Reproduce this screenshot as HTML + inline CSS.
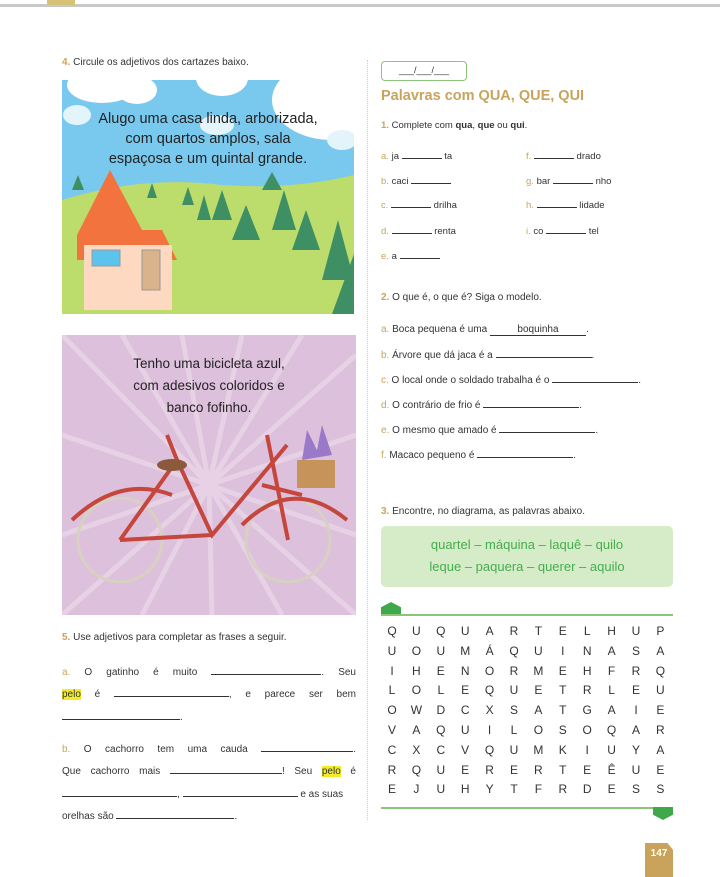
<!DOCTYPE html><html><head><meta charset="utf-8"><style>
body{margin:0;width:720px;height:877px;background:#fff;position:relative;overflow:hidden;font-family:"Liberation Sans",sans-serif;color:#333;font-size:10px}
.a{position:absolute;white-space:nowrap}
.n{color:#c9a35b;font-weight:bold}
.l{color:#c9a35b}
.u{display:inline-block;border-bottom:1px solid #333;height:8px;vertical-align:baseline}
.hl{background:#f3ea2a}
.g{position:absolute;font-size:12px;color:#333;width:16px;text-align:center}
</style></head><body>
<div class="a" style="left:0;top:4px;width:720px;height:3px;background:#c8c8c8"></div>
<div class="a" style="left:47px;top:0;width:28px;height:5px;background:#d8c27a"></div>
<div class="a" style="left:367px;top:60px;height:760px;border-left:1px dotted #d8cfa0"></div>

<div class="a" style="left:62px;top:57px;font-size:10px"><span class="n">4.</span> Circule os adjetivos dos cartazes baixo.</div>
<svg class="a" style="left:62px;top:80px" width="292" height="234" viewBox="0 0 292 234">
<rect width="292" height="234" fill="#79c9ef"/>
<path d="M0 120 Q80 95 160 105 Q230 110 292 95 L292 234 L0 234Z" fill="#bcdc6c"/>
<ellipse cx="40" cy="5" rx="35" ry="18" fill="#fff"/><ellipse cx="75" cy="10" rx="20" ry="14" fill="#fff"/>
<ellipse cx="160" cy="-2" rx="26" ry="18" fill="#fff"/>
<ellipse cx="270" cy="20" rx="60" ry="40" fill="#fff"/>
<ellipse cx="155" cy="45" rx="17" ry="10" fill="#e4f4fb"/>
<ellipse cx="15" cy="35" rx="14" ry="10" fill="#e4f4fb"/>
<ellipse cx="280" cy="60" rx="15" ry="10" fill="#e4f4fb"/>
<g fill="#3e8f64"><path d="M150 140 l10 -30 l10 30z"/><path d="M170 160 l14 -35 l14 35z"/><path d="M210 150 l12 -40 l12 40z"/><path d="M230 170 l14 -40 l14 40z"/><path d="M260 200 l16 -60 l16 60z"/><path d="M270 234 l22 -60 l0 60z"/><path d="M120 125 l6 -18 l6 18z"/><path d="M85 118 l5 -15 l5 15z"/><path d="M10 110 l6 -15 l6 15z"/><path d="M200 110 l10 -18 l10 18z"/><path d="M135 140 l7 -25 l7 25z"/></g>
<path d="M15 155 L48 90 L80 150 L100 150 L115 180 L15 180Z" fill="#f2733d"/>
<rect x="22" y="165" width="88" height="65" fill="#fcd9c0"/>
<rect x="30" y="170" width="28" height="16" fill="#5cc3ec" stroke="#999"/>
<rect x="80" y="170" width="18" height="40" fill="#d9b38c" stroke="#999"/>
</svg>
<div class="a" style="left:62px;top:109px;width:292px;text-align:center;font-size:14.5px;line-height:20px;color:#222">Alugo uma casa linda, arborizada,<br>com quartos amplos, sala<br>espaçosa e um quintal grande.</div>

<svg class="a" style="left:62px;top:335px" width="294" height="280" viewBox="0 0 294 280">
<rect width="294" height="280" fill="#ddc0dc"/>
<g stroke="#e6d2e4" stroke-width="5"><path d="M147 150 L0 0M147 150 L60 0M147 150 L120 0M147 150 L180 0M147 150 L240 0M147 150 L294 20M147 150 L294 100M147 150 L294 200M147 150 L294 280M147 150 L220 280M147 150 L150 280M147 150 L80 280M147 150 L0 280M147 150 L0 200M147 150 L0 100"/></g>
<g fill="none" stroke-width="3"><circle cx="58" cy="205" r="42" stroke="#d8d0c0"/><circle cx="226" cy="205" r="42" stroke="#d8d0c0"/></g>
<g fill="none" stroke="#c4463c" stroke-width="4"><path d="M58 205 L115 125 L150 200 L225 110 M115 125 L105 100 M150 200 L58 205 M200 150 L240 160 M226 205 L205 100"/><path d="M10 185 Q58 140 110 160"/><path d="M180 190 Q230 140 285 185"/></g>
<ellipse cx="110" cy="130" rx="15" ry="6" fill="#8b5a3c"/>
<rect x="235" y="125" width="38" height="28" fill="#c6935a"/>
<path d="M240 125 l5 -30 l10 20 l5 -25 l10 30z" fill="#9a7ac8"/>
</svg>
<div class="a" style="left:62px;top:353px;width:294px;text-align:center;font-size:13.5px;line-height:22px;color:#222">Tenho uma bicicleta azul,<br>com adesivos coloridos e<br>banco fofinho.</div>

<div class="a" style="left:62px;top:632px"><span class="n">5.</span> Use adjetivos para completar as frases a seguir.</div>
<div class="a" style="left:62px;top:666px;width:294px;text-align:justify;text-align-last:justify"><span class="l">a.</span> O gatinho é muito <span class="u" style="width:110px"></span>. Seu</div>
<div class="a" style="left:62px;top:688px;width:294px;text-align:justify;text-align-last:justify"><span class="hl">pelo</span> é <span class="u" style="width:115px"></span>, e parece ser bem</div>
<div class="a" style="left:62px;top:711px"><span class="u" style="width:118px"></span>.</div>
<div class="a" style="left:62px;top:743px;width:294px;text-align:justify;text-align-last:justify"><span class="l">b.</span> O cachorro tem uma cauda <span class="u" style="width:92px"></span>.</div>
<div class="a" style="left:62px;top:765px;width:294px;text-align:justify;text-align-last:justify">Que cachorro mais <span class="u" style="width:112px"></span>! Seu <span class="hl">pelo</span> é</div>
<div class="a" style="left:62px;top:788px"><span class="u" style="width:115px"></span>, <span class="u" style="width:115px"></span> e as suas</div>
<div class="a" style="left:62px;top:810px">orelhas são <span class="u" style="width:118px"></span>.</div>

<div class="a" style="left:381px;top:61px;width:84px;height:18px;border:1px solid #8cc47a;border-radius:4px;font-size:9px;text-align:center;line-height:16px">___/___/___</div>
<div class="a" style="left:381px;top:88px;font-size:14.5px;font-weight:bold;color:#c9a35b">Palavras com QUA, QUE, QUI</div>
<div class="a" style="left:381px;top:120px;font-size:9.5px"><span class="n">1.</span> Complete com <b>qua</b>, <b>que</b> ou <b>qui</b>.</div>
<div class="a" style="left:381px;top:150px;font-size:9.5px"><span class="l">a.</span> ja <span class="u" style="width:40px"></span> ta</div>
<div class="a" style="left:526px;top:150px;font-size:9.5px"><span class="l">f.</span> <span class="u" style="width:40px"></span> drado</div>
<div class="a" style="left:381px;top:175px;font-size:9.5px"><span class="l">b.</span> caci <span class="u" style="width:40px"></span></div>
<div class="a" style="left:526px;top:175px;font-size:9.5px"><span class="l">g.</span> bar <span class="u" style="width:40px"></span> nho</div>
<div class="a" style="left:381px;top:199px;font-size:9.5px"><span class="l">c.</span> <span class="u" style="width:40px"></span> drilha</div>
<div class="a" style="left:526px;top:199px;font-size:9.5px"><span class="l">h.</span> <span class="u" style="width:40px"></span> lidade</div>
<div class="a" style="left:381px;top:225px;font-size:9.5px"><span class="l">d.</span> <span class="u" style="width:40px"></span> renta</div>
<div class="a" style="left:526px;top:225px;font-size:9.5px"><span class="l">i.</span> co <span class="u" style="width:40px"></span> tel</div>
<div class="a" style="left:381px;top:250px;font-size:9.5px"><span class="l">e.</span> a <span class="u" style="width:40px"></span></div>

<div class="a" style="left:381px;top:292px"><span class="n">2.</span> O que é, o que é? Siga o modelo.</div>
<div class="a" style="left:381px;top:324px"><span class="l">a.</span> Boca pequena é uma <span style="display:inline-block;width:96px;text-align:center;border-bottom:1px solid #333;line-height:10px">boquinha</span>.</div>
<div class="a" style="left:381px;top:349px"><span class="l">b.</span> Árvore que dá jaca é a <span class="u" style="width:96px"></span>.</div>
<div class="a" style="left:381px;top:374px"><span class="l">c.</span> O local onde o soldado trabalha é o <span class="u" style="width:86px"></span>.</div>
<div class="a" style="left:381px;top:399px"><span class="l">d.</span> O contrário de frio é <span class="u" style="width:96px"></span>.</div>
<div class="a" style="left:381px;top:424px"><span class="l">e.</span> O mesmo que amado é <span class="u" style="width:96px"></span>.</div>
<div class="a" style="left:381px;top:449px"><span class="l">f.</span> Macaco pequeno é <span class="u" style="width:96px"></span>.</div>

<div class="a" style="left:381px;top:506px"><span class="n">3.</span> Encontre, no diagrama, as palavras abaixo.</div>
<div class="a" style="left:381px;top:526px;width:292px;height:61px;background:#d6ecc8;border-radius:5px;color:#45ad4e;font-size:13px;text-align:center;line-height:22px;padding-top:8px;box-sizing:border-box">quartel – máquina – laquê – quilo<br>leque – paquera – querer – aquilo</div>
<div class="a" style="left:381px;top:602px;width:20px;height:13px;background:#3fa84a;clip-path:polygon(0 40%,50% 0,100% 40%,100% 100%,0 100%)"></div>
<div class="a" style="left:381px;top:614px;width:292px;height:2px;background:#8cc47a"></div>
<div class="a" style="left:381px;top:807px;width:292px;height:2px;background:#8cc47a"></div>
<div class="a" style="left:653px;top:807px;width:20px;height:13px;background:#3fa84a;clip-path:polygon(0 0,100% 0,100% 60%,50% 100%,0 60%)"></div>
<div id="grid"></div>
<script>
var r=["QUQUARTELHUP","UOUMÁQUINASA","IHENORMEHFRQ","LOLEQUETRLEU","OWDCXSATGAIE","VAQUILOSOQAR","CXCVQUMKIUYA","RQUERERTEÊUE","EJUHYTFRDESS"],h="";
for(var i=0;i<9;i++)for(var j=0;j<12;j++)h+='<div class="g" style="left:'+(384+j*24.4)+'px;top:'+(624+i*19.8)+'px">'+r[i][j]+'</div>';
document.getElementById("grid").innerHTML=h;
</script>
<div class="a" style="left:645px;top:843px;width:28px;height:34px;background:#c9a35b;color:#fff;font-weight:bold;font-size:10px;text-align:center;line-height:22px;clip-path:polygon(0 0,80% 0,100% 20%,100% 100%,0 100%)">147</div>
</body></html>
